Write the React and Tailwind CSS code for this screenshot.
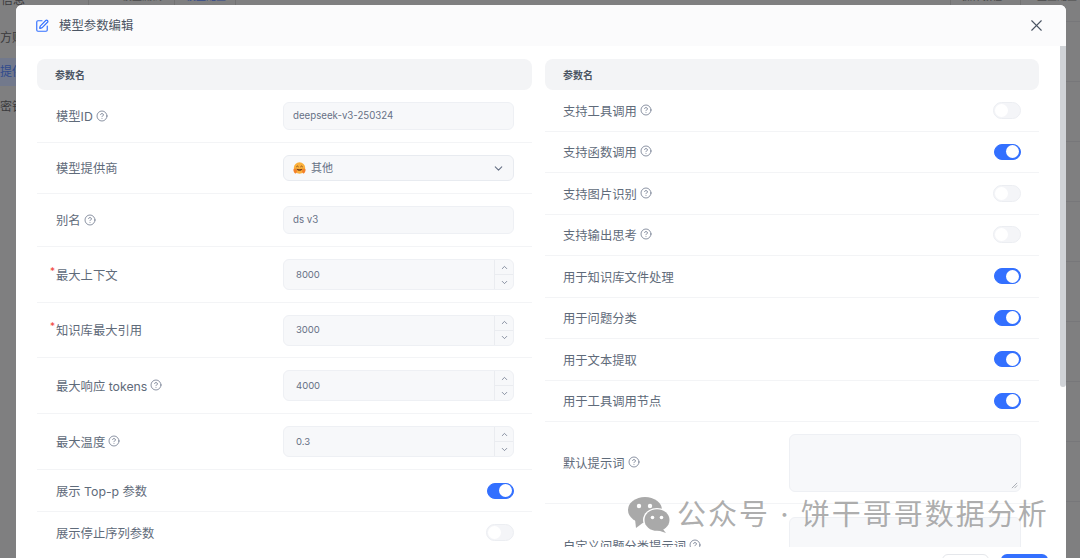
import React from 'react';
import { SquarePen, CircleHelp, X, ChevronUp, ChevronDown } from 'lucide-react';

const Help = () => <CircleHelp className="ml-[3px] mt-[-4px] h-[12px] w-[12px] text-[#667085]" strokeWidth={1.5} />;

const Switch = ({ on }) => (
  <div
    className={`flex items-center rounded-full border px-[1px] ${
      on
        ? 'h-[16px] w-[27px] justify-end border-[#3370ff] bg-[#3370ff]'
        : 'h-[17px] w-[28px] justify-start border-[#eceef2] bg-[#f4f5f8]'
    }`}
  >
    <div className="h-[13px] w-[13px] rounded-full bg-white" />
  </div>
);

const TextField = ({ value }) => (
  <div className="flex h-[28px] w-[231px] items-center rounded-md border border-[#eef0f4] bg-[#f7f8fa] px-[9px] pt-[1px] text-[9.700px] text-[#667085]">
    {value}
  </div>
);

const Stepper = ({ value }) => (
  <div className="flex h-[31px] w-[231px] items-center rounded-md border border-[#eef0f4] bg-[#f7f8fa] text-[9.500px] text-[#667085]">
    <span className="flex-1 pl-3 pt-[1px]">{value}</span>
    <div className="flex h-full w-[19px] flex-col border-l border-[#eaecf0] text-[#667085]">
      <div className="flex flex-1 items-center justify-center border-b border-[#eaecf0]">
        <ChevronUp className="h-[9px] w-[9px]" />
      </div>
      <div className="flex flex-1 items-center justify-center">
        <ChevronDown className="h-[9px] w-[9px]" />
      </div>
    </div>
  </div>
);

const Hug = () => (
  <svg viewBox="0 0 24 24" className="h-[13px] w-[13px]">
    <circle cx="12" cy="11" r="10.500" fill="#fbb03b" />
    <path d="M1 13c2-2 5-1 6 2s-1 7-3 6-4-5-3-8zM23 13c-2-2-5-1-6 2s1 7 3 6 4-5 3-8z" fill="#f4812a" />
    <path d="M6.500 12.500c3.500 1 7.500 1 11 0-1 5-10 5-11 0z" fill="#7a3f1a" />
    <path d="M6.500 8.500q1.700-2.500 3.400 0M14.100 8.500q1.700-2.500 3.400 0" fill="none" stroke="#6b3a1a" strokeWidth="1.500" strokeLinecap="round" />
  </svg>
);

const WechatMark = () => (
  <svg viewBox="0 0 42 36" className="h-[36px] w-[42px] shrink-0">
    <path d="M7 22L8 31L16 25Z" fill="#a9a9a9" />
    <ellipse cx="17" cy="13" rx="17" ry="13" fill="#a9a9a9" />
    <circle cx="11" cy="9" r="2.200" fill="#fff" />
    <circle cx="22" cy="9" r="2.200" fill="#fff" />
    <ellipse cx="29" cy="23" rx="14" ry="12" fill="#fff" />
    <path d="M34 31L38 36L29 33Z" fill="#a9a9a9" />
    <ellipse cx="29" cy="23" rx="12.500" ry="10.800" fill="#a9a9a9" />
    <circle cx="24.500" cy="20.500" r="1.800" fill="#fff" />
    <circle cx="33.500" cy="20.500" r="1.800" fill="#fff" />
  </svg>
);

const leftRows = [
  { label: '模型ID', help: true, h: 'h-[53px]', control: <TextField value="deepseek-v3-250324" /> },
  {
    label: '模型提供商',
    h: 'h-[51px]',
    control: (
      <div className="flex h-[26px] w-[231px] items-center rounded-md border border-[#e8ebf0] bg-[#f7f8fa] pl-[9px] pr-[8px] text-[11px] text-[#667085]">
        <Hug />
        <span className="ml-[5px] flex-1">其他</span>
        <ChevronDown className="h-[13px] w-[13px]" />
      </div>
    ),
  },
  { label: '别名', help: true, h: 'h-[53px]', control: <TextField value="ds v3" /> },
  { label: '最大上下文', required: true, h: 'h-[56px]', control: <Stepper value="8000" /> },
  { label: '知识库最大引用', required: true, h: 'h-[55px]', control: <Stepper value="3000" /> },
  { label: '最大响应 tokens', help: true, h: 'h-[56px]', control: <Stepper value="4000" /> },
  { label: '最大温度', help: true, h: 'h-[56px]', control: <Stepper value="0.3" /> },
  { label: '展示 Top-p 参数', h: 'h-[42px]', control: <Switch on /> },
  { label: '展示停止序列参数', h: 'h-[42px]', control: <Switch /> },
];

const rightRows = [
  { label: '支持工具调用', help: true },
  { label: '支持函数调用', help: true, on: true },
  { label: '支持图片识别', help: true },
  { label: '支持输出思考', help: true },
  { label: '用于知识库文件处理', on: true },
  { label: '用于问题分类', on: true },
  { label: '用于文本提取', on: true },
  { label: '用于工具调用节点', on: true },
];

const ColumnHead = () => (
  <div className="flex h-[31px] items-center rounded-lg bg-[#f3f4f6] pl-[18px] pt-[1px] text-[10px] font-bold text-[#4b5563]">
    参数名
  </div>
);

const Row = ({ label, help, required, h, pl = 'pl-[19px]', children }) => (
  <div className={`flex items-center justify-between border-b border-[#f3f4f6] pr-[18px] ${pl} ${h}`}>
    <div className="relative flex items-center pt-[3px] text-[12.300px] text-[#5f6b7a]">
      {required && <span className="absolute -left-[6px] top-0 text-[10px] text-[#f04438]">*</span>}
      {label}
      {help && <Help />}
    </div>
    {children}
  </div>
);

const Backdrop = () => (
  <div className="absolute inset-0 text-[12px] text-[#3a3a3c]">
    <div className="absolute left-0 top-[-9px] pl-[1px]">信息</div>
    <div className="absolute left-0 top-[29px]">方账</div>
    <div className="absolute left-0 top-[58px] flex h-[28px] w-[16px] items-center overflow-hidden whitespace-nowrap bg-[#72798c] text-[#2f4a8c]">提供</div>
    <div className="absolute left-0 top-[98px]">密钥</div>
    <div className="absolute left-[88px] top-0 h-[5px] w-[148px] border-x border-[#727272]" />
    <div className="absolute left-[174px] top-0 h-[5px] w-0 border-l border-[#727272]" />
    <div className="absolute left-[122px] top-[-11px] text-[10px] text-[#4a4a4a]">模型测试</div>
    <div className="absolute left-[186px] top-[-11px] text-[10px] text-[#33498a]">模型配置</div>
    <div className="absolute left-[950px] top-0 h-[5px] w-[71px] border-x border-[#727272]" />
    <div className="absolute left-[962px] top-[-11px] text-[10px] text-[#4a4a4a]">操作教程</div>
    <div className="absolute left-[1037px] top-[-11px] text-[10px] text-[#4a4a4a]">重置配置</div>
    <div className="absolute right-0 top-[-38px] w-[14px]">
      {[...Array(10)].map((_, i) => (
        <div key={i} className="h-[60px] border-b border-[#77777a]" />
      ))}
    </div>
  </div>
);

export default function App() {
  return (
    <div
      className="relative h-[558px] w-[1080px] overflow-hidden bg-[#7f7f80]"
      style={{ fontFamily: 'Inter, "Noto Sans CJK SC", sans-serif' }}
    >
      <Backdrop />

      {/* dialog */}
      <div className="absolute left-[16px] top-[5px] h-[553px] w-[1050px] overflow-hidden rounded-t-md bg-white">
        <div className="flex h-[41px] items-center justify-between bg-[#fbfbfc] pl-[19px] pr-[18px]">
          <div className="flex items-center gap-[10px] pt-[2px] text-[12.400px] text-[#4b5563]">
            <SquarePen className="mt-[-1px] h-[14px] w-[14px] text-[#3370ff]" strokeWidth={2} />
            模型参数编辑
          </div>
          <div className="flex h-[24px] w-[24px] items-center justify-center">
            <X className="h-[19px] w-[19px] text-[#4b5563]" strokeWidth={1.400} />
          </div>
        </div>

        <div className="flex h-[512px]">
          <div className="flex flex-1 items-start gap-[13px] pl-[21px] pt-[13px]">
            <div className="w-[495px]">
              <ColumnHead />
              {leftRows.map((r) => (
                <Row key={r.label} label={r.label} help={r.help} required={r.required} h={r.h}>
                  {r.control}
                </Row>
              ))}
            </div>

            <div className="w-[494px]">
              <ColumnHead />
              {rightRows.map((r) => (
                <Row key={r.label} label={r.label} help={r.help} h="h-[41.500px]" pl="pl-[18px]">
                  <Switch on={r.on} />
                </Row>
              ))}
              <Row label="默认提示词" help h="h-[82px]" pl="pl-[18px]">
                <div className="relative h-[58px] w-[232px] rounded-md border border-[#eef0f4] bg-[#f7f8fa]">
                  <svg viewBox="0 0 8 8" className="absolute bottom-[2px] right-[2px] h-[7px] w-[7px]">
                    <path d="M1 7L7 1M4 7L7 4" stroke="#8a8f98" strokeWidth="0.8" />
                  </svg>
                </div>
              </Row>
              <Row label="自定义问题分类提示词" help h="h-[84px]" pl="pl-[18px]">
                <div className="h-[58px] w-[232px] rounded-md border border-[#eef0f4] bg-[#f7f8fa]" />
              </Row>
            </div>
          </div>

          <div className="h-full w-[6px] shrink-0 bg-white">
            <div className="h-[341px] w-full rounded-b-sm bg-[#d0d3d7]" />
          </div>
        </div>

        {/* footer sits over the scrolled body */}
        <div className="absolute bottom-0 left-0 right-0 flex h-[11px] justify-end gap-[12px] bg-white pr-[18px]">
          <div className="mt-[7px] h-[12px] w-[47px] rounded-t-md border border-[#e5e7eb] bg-white" />
          <div className="mt-[7px] h-[12px] w-[47px] rounded-t-md bg-[#3370ff]" />
        </div>
      </div>

      {/* watermark */}
      <div className="absolute left-[628px] top-[497px] flex h-[36px] items-start gap-[7px] text-[29px] leading-[36px] tracking-[2px] text-[#8a8a8a]/70">
        <WechatMark />
        <span className="whitespace-nowrap">公众号 · 饼干哥哥数据分析</span>
      </div>
    </div>
  );
}
